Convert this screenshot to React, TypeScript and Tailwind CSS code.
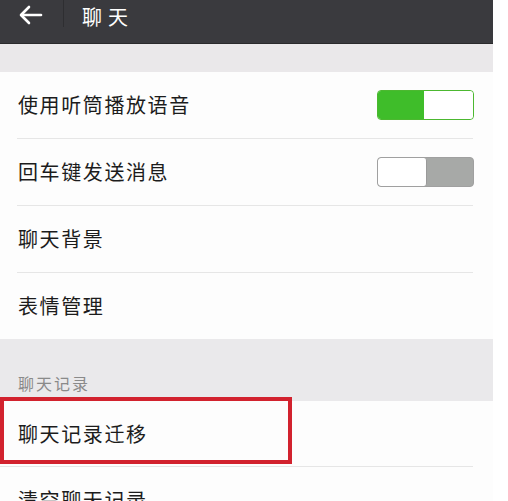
import React from 'react';

const font = { fontFamily: '"Noto Sans CJK SC", "Noto Sans", sans-serif' };

const Toggle = ({ on }: { on: boolean }) =>
  on ? (
    <div className="flex h-[30px] w-[97px] overflow-hidden rounded-[4px] border border-[#4cb830]">
      <div className="w-[46px] bg-[#3fbd2a]" />
      <div className="flex-1 rounded-[3px] bg-white" />
    </div>
  ) : (
    <div className="flex h-[30px] w-[97px] overflow-hidden rounded-[4px] border border-[#a0a0a0] bg-[#a7a9a7]">
      <div className="w-[49px] rounded-[3px] border-r border-[#9a9a9a] bg-white" />
      <div className="flex-1" />
    </div>
  );

const Row = ({
  label,
  right,
  divider = true,
}: {
  label: string;
  right?: React.ReactNode;
  divider?: boolean;
}) => (
  <div className="relative bg-[#fdfdfd]">
    <div className="flex h-[66px] items-center justify-between pl-[18px] pr-[19px]">
      <span className="text-[20px] tracking-[1.6px] text-[#1c1c1c]">{label}</span>
      {right}
    </div>
    {divider && <div className="ml-[17px] mr-[20px] h-px bg-[#e6e6e6]" />}
  </div>
);

export default function App() {
  return (
    <div className="h-[501px] w-[508px] overflow-hidden bg-white" style={font}>
      <div className="w-[493px]">
        {/* header */}
        <div className="flex h-[44px] items-start border-b border-[#2a2a2c] bg-[#3a3a3e]">
          <div className="flex h-[28px] w-[63px] items-center justify-center">
            <svg width="24" height="20" viewBox="0 0 24 20" fill="none" stroke="white" strokeWidth="2.6" strokeLinecap="round" strokeLinejoin="round" className="mt-[2px] ml-[-2px]">
              <path d="M22 10H3" />
              <path d="M10 2L2 10L10 18" />
            </svg>
          </div>
          <div className="h-[27px] w-px bg-[#2e2e31]" />
          <span className="ml-[18px] mt-[2px] text-[20px] tracking-[6px] text-white">聊天</span>
        </div>

        <div className="h-[28px] bg-[#eae8ea]" />

        <Row label="使用听筒播放语音" right={<Toggle on />} />
        <Row label="回车键发送消息" right={<Toggle on={false} />} />
        <Row label="聊天背景" />
        <Row label="表情管理" divider={false} />

        <div className="flex h-[62px] items-end bg-[#eae9eb] pb-[6px] pl-[18px]">
          <span className="text-[16px] tracking-[2px] text-[#8a8a8a]">聊天记录</span>
        </div>

        <div className="relative bg-[#fdfdfd]">
          <div className="flex h-[65px] items-center pl-[18px]">
            <span className="text-[20px] tracking-[1.6px] text-[#1c1c1c]">聊天记录迁移</span>
          </div>
          <div className="ml-0 mr-[20px] h-px bg-[#e6e6e6]" />
          <div className="absolute left-0 top-[-4px] h-[67px] w-[292px] border-[4px] border-[#d2222e]" />
        </div>

        <Row label="清空聊天记录" />
      </div>
    </div>
  );
}
